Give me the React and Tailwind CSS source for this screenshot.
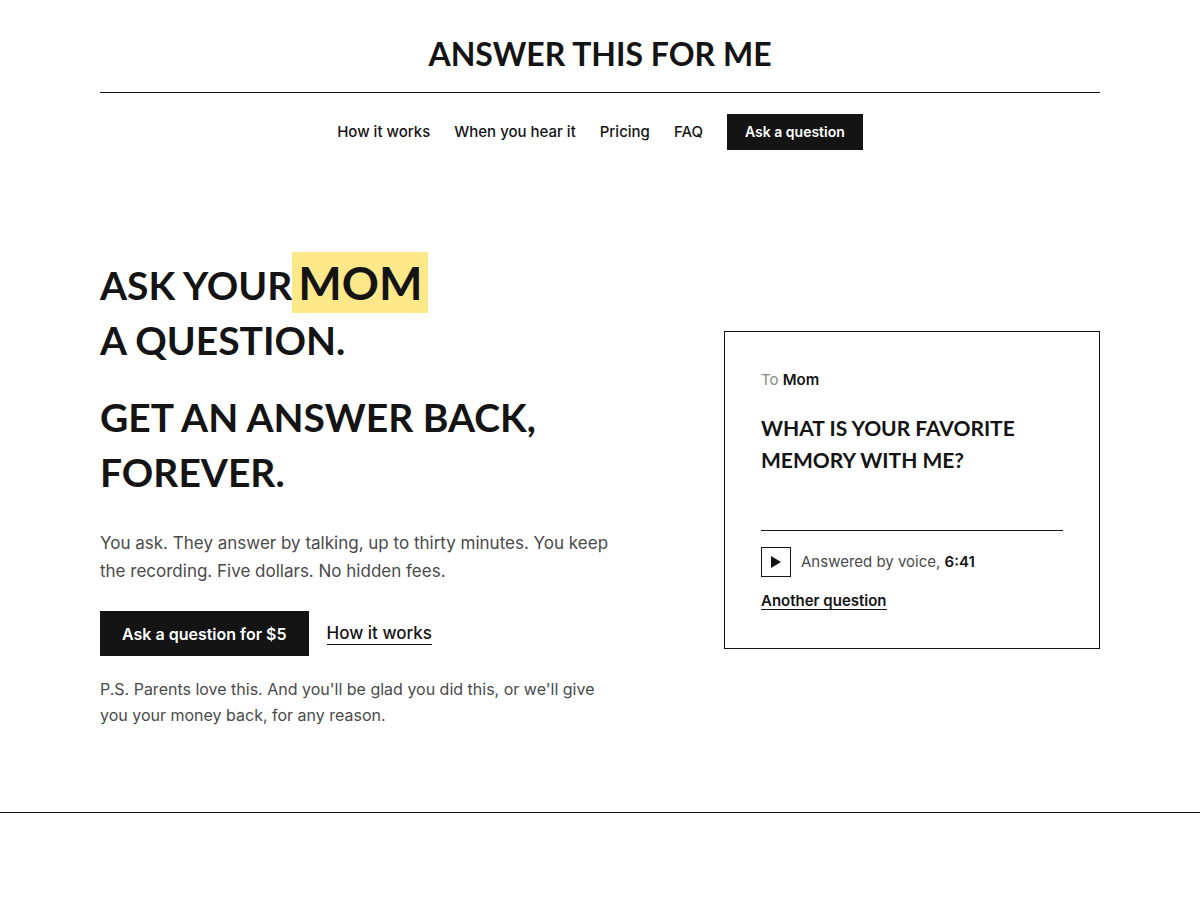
const navLinks = [
  { label: 'How it works', href: '#how-it-works' },
  { label: 'When you hear it', href: '#when-you-hear-it' },
  { label: 'Pricing', href: '#pricing' },
  { label: 'FAQ', href: '#faq' },
]

function Header() {
  return (
    <header className="max-w-[1000px] mx-auto">
      <div className="pt-8 pb-4 border-b border-[#141414] text-center">
        <a href="#top" className="font-['Lato',sans-serif] font-bold text-[32px] leading-[44px]">
          ANSWER THIS FOR ME
        </a>
      </div>
      <nav className="flex flex-wrap items-center justify-center gap-6 pt-[21px] text-[15px] font-medium">
        {navLinks.map((link) => (
          <a key={link.href} href={link.href}>
            {link.label}
          </a>
        ))}
        <button type="button" className="h-9 px-[18px] bg-[#141414] text-white font-semibold text-sm">
          Ask a question
        </button>
      </nav>
    </header>
  )
}

function QuestionCard() {
  return (
    <div className="border border-[#141414] p-9">
      <p className="text-[15px] leading-6 text-[#8a8a8a]">
        To <strong className="font-semibold text-[#141414]">Mom</strong>
      </p>
      <h2 className="mt-5 min-h-24 font-['Lato',sans-serif] font-bold text-[21px] leading-8">
        WHAT IS YOUR FAVORITE MEMORY WITH ME?
      </h2>
      <div className="mt-[22px] pt-4 border-t border-[#141414] flex items-center gap-[10px]">
        <button
          type="button"
          aria-label="Play answer"
          className="w-[30px] h-[30px] border border-[#141414] flex items-center justify-center"
        >
          <svg width="10" height="12" viewBox="0 0 10 12" fill="currentColor">
            <path d="M0 0L10 6L0 12Z" />
          </svg>
        </button>
        <p className="text-[15px] leading-6 text-[#4a4a4a]">
          Answered by voice, <strong className="font-semibold text-[#141414]">6:41</strong>
        </p>
      </div>
      <button type="button" className="mt-4 border-b border-[#141414] text-[15px] leading-4 font-semibold">
        Another question
      </button>
    </div>
  )
}

function Hero() {
  return (
    <section className="border-b border-[#141414] pt-[102px] pb-[84px]">
      <div className="max-w-[1000px] mx-auto grid grid-cols-[3fr_2fr] gap-[60px] items-center">
        <div>
          <h1 className="font-['Lato',sans-serif] font-bold text-[39px] leading-[55px]">
            <span className="block">
              ASK YOUR
              <span className="inline-block px-1.5 bg-[#ffe88a] text-[46px] leading-[61px]">MOM</span>
              <br />
              A QUESTION.
            </span>
            <span className="block mt-[22px]">GET AN ANSWER BACK, FOREVER.</span>
          </h1>
          <p className="mt-[29px] max-w-[520px] text-[17px] leading-7 text-[#4a4a4a]">
            You ask. They answer by talking, up to thirty minutes. You keep the recording. Five dollars. No hidden
            fees.
          </p>
          <div className="mt-[26px] flex items-center gap-[18px]">
            <button type="button" className="h-[45px] px-[22px] bg-[#141414] text-white text-base font-semibold">
              Ask a question for $5
            </button>
            <a href="#how-it-works" className="border-b border-[#141414] text-[17px] leading-[22px] font-medium">
              How it works
            </a>
          </div>
          <p className="mt-5 max-w-[520px] text-base leading-[26px] text-[#4a4a4a]">
            P.S. Parents love this. And you'll be glad you did this, or we'll give you your money back, for any
            reason.
          </p>
        </div>
        <QuestionCard />
      </div>
    </section>
  )
}

export default function App() {
  return (
    <div id="top" className="min-h-screen bg-white text-[#141414] font-['Inter',sans-serif]">
      <Header />
      <main>
        <Hero />
      </main>
    </div>
  )
}
